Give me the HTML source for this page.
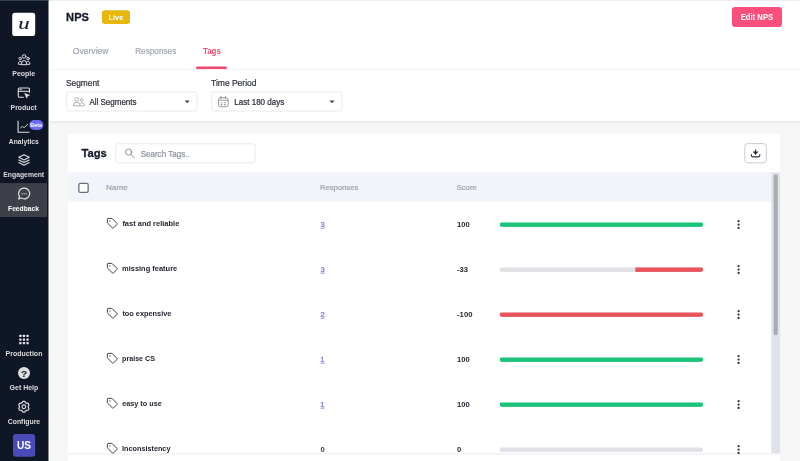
<!DOCTYPE html>
<html lang="en">
<head>
<meta charset="utf-8">
<title>NPS - Tags</title>
<style>
*{box-sizing:border-box;margin:0;padding:0}
html,body{width:800px;height:461px;overflow:hidden;background:#f6f6f6}
body{position:relative;font-family:"Liberation Sans","DejaVu Sans",sans-serif}
#g{position:absolute;left:0;top:0;width:800px;height:461px;display:block}
#page{position:absolute;left:0;top:0;width:800px;height:461px;overflow:hidden;background:#f6f6f6;will-change:transform}
.t{position:absolute;left:0;top:0;white-space:nowrap;line-height:1;transform-origin:0 0;display:block}
.ic{fill:none;stroke:#dfe0e2;stroke-linecap:round;stroke-linejoin:round}
</style>
</head>
<body>
<div id="page">
<svg id="g" width="800" height="461" viewBox="0 0 800 461">
<defs>
<linearGradient id="sh" x1="0" y1="0" x2="0" y2="1"><stop offset="0" stop-color="#e3e4e7"/><stop offset="0.3" stop-color="#ebebed"/><stop offset="0.65" stop-color="#f4f4f4"/><stop offset="1" stop-color="#f6f6f6"/></linearGradient>
</defs>
<rect x="48.00" y="0.00" width="752.00" height="121.40" fill="#fff"/>
<rect x="48.00" y="0.00" width="752.00" height="1.00" fill="#efefef"/>
<rect x="48.00" y="121.20" width="752.00" height="3.60" fill="url(#sh)"/>
<rect x="50.00" y="69.00" width="750.00" height="1.00" fill="#f2f2f2"/>
<rect x="48.00" y="121.00" width="2.20" height="340.00" fill="#fff"/>
<rect x="196.00" y="66.40" width="31.00" height="2.60" rx="1.3" fill="#f5486f"/>
<rect x="102.00" y="10.20" width="28.00" height="13.80" rx="3" fill="#e8b70d"/>
<rect x="732.00" y="7.00" width="50.00" height="20.00" rx="3" fill="#fa4f7c"/>
<rect x="66.70" y="91.90" width="130.30" height="19.10" rx="2.50" fill="#fff" stroke="#e8eaee" stroke-width="1"/>
<rect x="211.70" y="91.90" width="130.30" height="19.10" rx="2.50" fill="#fff" stroke="#e8eaee" stroke-width="1"/>
<path d="M184.6 100.5h5.1l-2.55 2.7z" fill="#3b3f4a"/>
<path d="M329.5 100.5h5.1l-2.55 2.7z" fill="#3b3f4a"/>
<g transform="translate(73.00 96.60) scale(0.5000)"><g fill="none" stroke="#a5a8ae" stroke-width="1.8" stroke-linejoin="round"><circle cx="7.5" cy="5.5" r="3.6"/><circle cx="17.5" cy="7" r="2.8"/><path d="M1 18.5v-1.5a6.5 5.5 0 0 1 13 0v1.5z"/><path d="M14 18.5h9v-1.2a5.2 4.6 0 0 0-8-3.9"/></g></g>
<g transform="translate(217.80 96.00) scale(0.5000)"><g fill="none" stroke="#8a8d94" stroke-width="1.8" stroke-linecap="round" stroke-linejoin="round"><rect x="1.5" y="3.5" width="19" height="18" rx="3.5"/><path d="M1.5 8.5h19M6.5 1v4M15.5 1v4"/><path d="M7 13.5h1.5M13.5 13.5H15M7 17.2h1.5M13.5 17.2H15" stroke-width="2.2"/></g></g>
<rect x="67.80" y="133.80" width="712.30" height="340.00" rx="4" fill="#fff"/>
<rect x="115.80" y="143.80" width="139.40" height="19.00" rx="2.50" fill="#fff" stroke="#e7e9f0" stroke-width="1"/>
<g transform="translate(124.80 148.30) scale(0.5000)"><g fill="none" stroke="#8a8d94" stroke-width="1.9" stroke-linecap="round"><circle cx="7.6" cy="7.6" r="6.2"/><path d="M12.4 12.2l6.6 6.2"/></g></g>
<rect x="744.80" y="143.60" width="21.50" height="19.20" rx="3.00" fill="#fff" stroke="#c9ccd2" stroke-width="1"/>
<g transform="translate(750.60 149.20) scale(0.5000)"><g fill="none" stroke="#2b2e37" stroke-width="2.2" stroke-linecap="round" stroke-linejoin="round"><path d="M10 1v8.5"/><path d="M1.5 10.5v1.6a3.2 3.2 0 0 0 3.2 3.2h10.6a3.2 3.2 0 0 0 3.2-3.2v-1.6"/></g><path d="M5.2 5.2h9.6L10 10.6z" fill="#2b2e37" stroke="#2b2e37" stroke-width="1" stroke-linejoin="round"/></g>
<rect x="67.80" y="172.30" width="703.60" height="29.40" fill="#f1f4f8"/>
<rect x="78.85" y="183.35" width="9.30" height="9.10" rx="1.35" fill="#fff" stroke="#6d7077" stroke-width="1.3"/>
<rect x="771.30" y="172.30" width="8.80" height="281.00" fill="#dfe2e6"/>
<rect x="773.60" y="174.30" width="4.20" height="161.00" rx="2.1" fill="#a9acb1"/>
<rect x="67.80" y="453.00" width="712.30" height="8.00" fill="#fff"/>
<rect x="67.80" y="453.00" width="712.30" height="1.60" fill="#f0f2f6"/>
<g transform="translate(106.80 217.80) scale(0.5000)"><g fill="none" stroke="#3c3f47" stroke-width="2.0" stroke-linejoin="round"><path d="M1.2 2.6a1.4 1.4 0 0 1 1.4-1.4h7.2a1.6 1.6 0 0 1 1.1.5l9.4 9.4a1.6 1.6 0 0 1 0 2.2l-6.9 6.9a1.6 1.6 0 0 1-2.2 0L1.7 10.8a1.6 1.6 0 0 1-.5-1.1z"/></g><circle cx="6.3" cy="6.3" r="1.3" fill="#45484f"/></g>
<clipPath id="c0"><rect x="499.6" y="222.3" width="203.6" height="4.6" rx="2.3"/></clipPath><g clip-path="url(#c0)">
<rect x="499.60" y="222.30" width="203.60" height="4.60" fill="#1cc37b"/>
</g>
<circle cx="738.6" cy="221.2" r="1.15" fill="#34373f"/>
<circle cx="738.6" cy="224.6" r="1.15" fill="#34373f"/>
<circle cx="738.6" cy="228.0" r="1.15" fill="#34373f"/>
<rect x="320.60" y="227.70" width="4.00" height="0.80" fill="#7070e2"/>
<g transform="translate(106.80 262.80) scale(0.5000)"><g fill="none" stroke="#3c3f47" stroke-width="2.0" stroke-linejoin="round"><path d="M1.2 2.6a1.4 1.4 0 0 1 1.4-1.4h7.2a1.6 1.6 0 0 1 1.1.5l9.4 9.4a1.6 1.6 0 0 1 0 2.2l-6.9 6.9a1.6 1.6 0 0 1-2.2 0L1.7 10.8a1.6 1.6 0 0 1-.5-1.1z"/></g><circle cx="6.3" cy="6.3" r="1.3" fill="#45484f"/></g>
<clipPath id="c1"><rect x="499.6" y="267.3" width="203.6" height="4.6" rx="2.3"/></clipPath><g clip-path="url(#c1)">
<rect x="499.60" y="267.30" width="203.60" height="4.60" fill="#dfe1e5"/>
<rect x="635.40" y="267.30" width="67.80" height="4.60" fill="#e9535b"/>
</g>
<circle cx="738.6" cy="266.2" r="1.15" fill="#34373f"/>
<circle cx="738.6" cy="269.6" r="1.15" fill="#34373f"/>
<circle cx="738.6" cy="273.0" r="1.15" fill="#34373f"/>
<rect x="320.60" y="272.70" width="4.00" height="0.80" fill="#7070e2"/>
<g transform="translate(106.80 307.80) scale(0.5000)"><g fill="none" stroke="#3c3f47" stroke-width="2.0" stroke-linejoin="round"><path d="M1.2 2.6a1.4 1.4 0 0 1 1.4-1.4h7.2a1.6 1.6 0 0 1 1.1.5l9.4 9.4a1.6 1.6 0 0 1 0 2.2l-6.9 6.9a1.6 1.6 0 0 1-2.2 0L1.7 10.8a1.6 1.6 0 0 1-.5-1.1z"/></g><circle cx="6.3" cy="6.3" r="1.3" fill="#45484f"/></g>
<clipPath id="c2"><rect x="499.6" y="312.3" width="203.6" height="4.6" rx="2.3"/></clipPath><g clip-path="url(#c2)">
<rect x="499.60" y="312.30" width="203.60" height="4.60" fill="#e9535b"/>
</g>
<circle cx="738.6" cy="311.2" r="1.15" fill="#34373f"/>
<circle cx="738.6" cy="314.6" r="1.15" fill="#34373f"/>
<circle cx="738.6" cy="318.0" r="1.15" fill="#34373f"/>
<rect x="320.60" y="317.70" width="4.00" height="0.80" fill="#7070e2"/>
<g transform="translate(106.80 352.80) scale(0.5000)"><g fill="none" stroke="#3c3f47" stroke-width="2.0" stroke-linejoin="round"><path d="M1.2 2.6a1.4 1.4 0 0 1 1.4-1.4h7.2a1.6 1.6 0 0 1 1.1.5l9.4 9.4a1.6 1.6 0 0 1 0 2.2l-6.9 6.9a1.6 1.6 0 0 1-2.2 0L1.7 10.8a1.6 1.6 0 0 1-.5-1.1z"/></g><circle cx="6.3" cy="6.3" r="1.3" fill="#45484f"/></g>
<clipPath id="c3"><rect x="499.6" y="357.3" width="203.6" height="4.6" rx="2.3"/></clipPath><g clip-path="url(#c3)">
<rect x="499.60" y="357.30" width="203.60" height="4.60" fill="#1cc37b"/>
</g>
<circle cx="738.6" cy="356.2" r="1.15" fill="#34373f"/>
<circle cx="738.6" cy="359.6" r="1.15" fill="#34373f"/>
<circle cx="738.6" cy="363.0" r="1.15" fill="#34373f"/>
<rect x="320.60" y="362.70" width="4.00" height="0.80" fill="#7070e2"/>
<g transform="translate(106.80 397.80) scale(0.5000)"><g fill="none" stroke="#3c3f47" stroke-width="2.0" stroke-linejoin="round"><path d="M1.2 2.6a1.4 1.4 0 0 1 1.4-1.4h7.2a1.6 1.6 0 0 1 1.1.5l9.4 9.4a1.6 1.6 0 0 1 0 2.2l-6.9 6.9a1.6 1.6 0 0 1-2.2 0L1.7 10.8a1.6 1.6 0 0 1-.5-1.1z"/></g><circle cx="6.3" cy="6.3" r="1.3" fill="#45484f"/></g>
<clipPath id="c4"><rect x="499.6" y="402.3" width="203.6" height="4.6" rx="2.3"/></clipPath><g clip-path="url(#c4)">
<rect x="499.60" y="402.30" width="203.60" height="4.60" fill="#1cc37b"/>
</g>
<circle cx="738.6" cy="401.2" r="1.15" fill="#34373f"/>
<circle cx="738.6" cy="404.6" r="1.15" fill="#34373f"/>
<circle cx="738.6" cy="408.0" r="1.15" fill="#34373f"/>
<rect x="320.60" y="407.70" width="4.00" height="0.80" fill="#7070e2"/>
<g transform="translate(106.80 442.80) scale(0.5000)"><g fill="none" stroke="#3c3f47" stroke-width="2.0" stroke-linejoin="round"><path d="M1.2 2.6a1.4 1.4 0 0 1 1.4-1.4h7.2a1.6 1.6 0 0 1 1.1.5l9.4 9.4a1.6 1.6 0 0 1 0 2.2l-6.9 6.9a1.6 1.6 0 0 1-2.2 0L1.7 10.8a1.6 1.6 0 0 1-.5-1.1z"/></g><circle cx="6.3" cy="6.3" r="1.3" fill="#45484f"/></g>
<clipPath id="c5"><rect x="499.6" y="447.3" width="203.6" height="4.6" rx="2.3"/></clipPath><g clip-path="url(#c5)">
<rect x="499.60" y="447.30" width="203.60" height="4.60" fill="#dfe1e5"/>
</g>
<circle cx="738.6" cy="446.2" r="1.15" fill="#34373f"/>
<circle cx="738.6" cy="449.6" r="1.15" fill="#34373f"/>
<circle cx="738.6" cy="453.0" r="1.15" fill="#34373f"/>
<rect x="0.00" y="0.00" width="48.50" height="461.00" fill="#0f1626"/>
<rect x="0.00" y="0.00" width="48.50" height="1.00" fill="#3b3f49"/>
<rect x="0.00" y="183.10" width="47.00" height="33.90" fill="#3d4049"/>
<rect x="12.20" y="12.80" width="23.00" height="23.20" rx="2.8" fill="#fff"/>
<rect x="29.30" y="120.00" width="14.10" height="10.00" rx="5" fill="#6b6bf3"/>
<rect x="13.00" y="434.00" width="22.20" height="22.80" rx="3" fill="#4a4ab9"/>
<g transform="translate(17.80 53.80) scale(0.5000)"><g class="ic" stroke-width="2.0"><circle cx="12.6" cy="5.2" r="3.6"/><circle cx="4.8" cy="9.6" r="2.6"/><circle cx="20.4" cy="9.6" r="2.6"/><path d="M7.6 21v-2.4a5 5 0 0 1 10 0V21z"/><path d="M7.6 21H1.2v-2a3.8 3.8 0 0 1 6.6-2.6M17.6 21H24v-2a3.8 3.8 0 0 0-6.6-2.6"/></g></g>
<g class="ic" stroke-width="1.05" style="stroke:#e2e3e5"><path d="M23.4 97.3h-3.9a1.2 1.2 0 0 1-1.2-1.2v-7a1.2 1.2 0 0 1 1.2-1.2h8.8a1.2 1.2 0 0 1 1.2 1.2v3.2"/><path d="M18.3 91.3h11.2" stroke-linecap="butt"/><path d="M19.9 89.6h1.5" stroke-width="0.9"/></g><path d="M24.7 93.3l4.9 1.9-2.1.8-.9 2.2z" fill="#e2e3e5" stroke="#e2e3e5" stroke-width="0.5" stroke-linejoin="round"/>
<g transform="translate(17.30 120.20) scale(0.5000)"><g class="ic" stroke-width="2.2"><path d="M1.6 1.2v23h22.6" stroke-linecap="butt" stroke-linejoin="miter"/><path d="M6.6 15.4l3.4-3 3.6 2.6 7.2-6.6" stroke-width="1.8"/></g></g>
<g transform="translate(18.00 154.00) scale(0.4840)"><g class="ic" stroke-width="2.3"><path d="M12.4 1.4l10.8 5.4-10.8 5.4L1.6 6.8z"/><path d="M1.8 12.4l10.6 5.4 10.6-5.4M1.8 17.6l10.6 5.4 10.6-5.4"/></g></g>
<g class="ic" stroke-width="1.15" style="stroke:#e4e5e7"><path d="M24.2 188.1a5.4 5.4 0 1 1-3.1 9.8l-2.5 1.2.9-2.7A5.4 5.4 0 0 1 24.2 188.1z"/></g><g fill="#b4b5b9"><circle cx="22.1" cy="193.7" r="0.75"/><circle cx="24.1" cy="193.7" r="0.75"/><circle cx="26.1" cy="193.7" r="0.75"/></g>
<g transform="translate(19.20 334.80) scale(0.5000)"><g fill="#e4e5e7"><rect x="0" y="0" width="4.6" height="4.6" rx="0.8"/><rect x="7.2" y="0" width="4.6" height="4.6" rx="0.8"/><rect x="14.4" y="0" width="4.6" height="4.6" rx="0.8"/><rect x="0" y="7.2" width="4.6" height="4.6" rx="0.8"/><rect x="7.2" y="7.2" width="4.6" height="4.6" rx="0.8"/><rect x="14.4" y="7.2" width="4.6" height="4.6" rx="0.8"/><rect x="0" y="14.4" width="4.6" height="4.6" rx="0.8"/><rect x="7.2" y="14.4" width="4.6" height="4.6" rx="0.8"/><rect x="14.4" y="14.4" width="4.6" height="4.6" rx="0.8"/></g></g>
<circle cx="24" cy="373" r="6" fill="#dddee0"/>
<g transform="translate(17.80 400.80) scale(0.5000)"><g class="ic" stroke-width="2.5"><path d="M12.10 1.00L13.05 1.04L13.96 1.36L14.66 2.34L15.21 3.35L15.86 3.83L16.55 4.19L17.20 4.61L17.95 4.93L19.10 4.90L20.30 5.02L21.03 5.65L21.54 6.45L21.98 7.29L22.15 8.24L21.66 9.34L21.06 10.32L20.97 11.12L21.00 11.90L20.97 12.68L21.06 13.48L21.66 14.46L22.15 15.56L21.98 16.51L21.54 17.35L21.03 18.15L20.30 18.78L19.10 18.90L17.95 18.87L17.20 19.19L16.55 19.61L15.86 19.97L15.21 20.45L14.66 21.46L13.96 22.44L13.05 22.76L12.10 22.80L11.15 22.76L10.24 22.44L9.54 21.46L8.99 20.45L8.34 19.97L7.65 19.61L7.00 19.19L6.25 18.87L5.10 18.90L3.90 18.78L3.17 18.15L2.66 17.35L2.22 16.51L2.05 15.56L2.54 14.46L3.14 13.48L3.23 12.68L3.20 11.90L3.23 11.12L3.14 10.32L2.54 9.34L2.05 8.24L2.22 7.29L2.66 6.45L3.17 5.65L3.90 5.02L5.10 4.90L6.25 4.93L7.00 4.61L7.65 4.19L8.34 3.83L8.99 3.35L9.54 2.34L10.24 1.36L11.15 1.04z"/><circle cx="12.1" cy="11.9" r="3.7" stroke-width="2.2"/></g></g>
</svg>
<div class="t" style="-webkit-text-stroke:0.3px;font-size:11.8px;font-weight:700;color:#141a2a;transform:translate(66.09px,12px) scaleX(0.9435)">NPS</div>
<div class="t" style="font-size:7.9px;font-weight:700;color:#ffffff;transform:translate(108.53px,14px) scaleX(0.9333)">Live</div>
<div class="t" style="font-size:8.5px;font-weight:700;color:#ffffff;transform:translate(740.63px,13px) scaleX(0.9061)">Edit NPS</div>
<div class="t" style="-webkit-text-stroke:0.22px;font-size:8.6px;font-weight:400;color:#a2a8b3;transform:translate(72.72px,47px) scaleX(1.0007)">Overview</div>
<div class="t" style="-webkit-text-stroke:0.22px;font-size:8.6px;font-weight:400;color:#a2a8b3;transform:translate(135.18px,47px) scaleX(0.9552)">Responses</div>
<div class="t" style="font-size:8.6px;font-weight:700;color:#f5486f;transform:translate(202.99px,47px) scaleX(0.9166)">Tags</div>
<div class="t" style="-webkit-text-stroke:0.22px;font-size:8.6px;font-weight:400;color:#30343f;transform:translate(65.93px,79px) scaleX(0.9735)">Segment</div>
<div class="t" style="-webkit-text-stroke:0.22px;font-size:8.6px;font-weight:400;color:#30343f;transform:translate(211.05px,79px) scaleX(0.9878)">Time Period</div>
<div class="t" style="-webkit-text-stroke:0.22px;font-size:8.6px;font-weight:400;color:#2a2e3a;transform:translate(89.40px,98px) scaleX(0.9310)">All Segments</div>
<div class="t" style="-webkit-text-stroke:0.22px;font-size:8.6px;font-weight:400;color:#2a2e3a;transform:translate(234.30px,98px) scaleX(0.9333)">Last 180 days</div>
<div class="t" style="-webkit-text-stroke:0.3px;font-size:11.8px;font-weight:700;color:#141a2a;transform:translate(81.38px,148px) scaleX(0.9500)">Tags</div>
<div class="t" style="-webkit-text-stroke:0.22px;font-size:8.6px;font-weight:400;color:#8d929c;transform:translate(140.65px,150px) scaleX(0.9346)">Search Tags..</div>
<div class="t" style="-webkit-text-stroke:0.22px;font-size:7.9px;font-weight:400;color:#9fa3ab;transform:translate(106.05px,184px) scaleX(1.0335)">Name</div>
<div class="t" style="-webkit-text-stroke:0.22px;font-size:7.9px;font-weight:400;color:#9fa3ab;transform:translate(319.89px,184px) scaleX(0.9709)">Responses</div>
<div class="t" style="-webkit-text-stroke:0.22px;font-size:7.9px;font-weight:400;color:#9fa3ab;transform:translate(456.63px,184px) scaleX(0.9761)">Score</div>
<div class="t" style="font-size:7.2px;font-weight:700;color:#dcdde0;transform:translate(12.31px,70px) scaleX(0.9705)">People</div>
<div class="t" style="font-size:7.2px;font-weight:700;color:#dcdde0;transform:translate(10.52px,104px) scaleX(0.9623)">Product</div>
<div class="t" style="font-size:7.2px;font-weight:700;color:#dcdde0;transform:translate(8.76px,138px) scaleX(0.9402)">Analytics</div>
<div class="t" style="font-size:7.2px;font-weight:700;color:#dcdde0;transform:translate(3.33px,171px) scaleX(0.9459)">Engagement</div>
<div class="t" style="font-size:7.2px;font-weight:700;color:#ffffff;transform:translate(8.03px,205px) scaleX(0.9349)">Feedback</div>
<div class="t" style="font-size:7.2px;font-weight:700;color:#dcdde0;transform:translate(5.51px,350px) scaleX(0.9730)">Production</div>
<div class="t" style="font-size:7.2px;font-weight:700;color:#dcdde0;transform:translate(9.56px,384px) scaleX(0.9724)">Get Help</div>
<div class="t" style="font-size:7.2px;font-weight:700;color:#dcdde0;transform:translate(7.76px,418px) scaleX(0.9552)">Configure</div>
<div class="t" style="font-size:5.8px;font-weight:700;color:#ffffff;transform:translate(30.25px,123px) scaleX(0.9306)">Beta</div>
<div class="t" style="font-size:10.6px;font-weight:700;color:#ffffff;transform:translate(16.90px,440px) scaleX(0.9541)">US</div>
<div class="t" style="font-size:9.6px;font-weight:700;color:#0f1626;transform:translate(21.07px,369px) scaleX(1.0526)">?</div>
<div class="t" style="font-size:7.9px;font-weight:700;color:#1e212a;transform:translate(122.38px,220px) scaleX(0.9476)">fast and reliable</div>
<div class="t" style="-webkit-text-stroke:0.22px;font-size:8.0px;font-weight:400;color:#7070e2;transform:translate(320.44px,221px) scaleX(0.9500)">3</div>
<div class="t" style="font-size:8.0px;font-weight:700;color:#1e212a;transform:translate(456.92px,221px) scaleX(0.9520)">100</div>
<div class="t" style="font-size:7.9px;font-weight:700;color:#1e212a;transform:translate(122.03px,265px) scaleX(0.9461)">missing feature</div>
<div class="t" style="-webkit-text-stroke:0.22px;font-size:8.0px;font-weight:400;color:#7070e2;transform:translate(320.44px,266px) scaleX(0.9500)">3</div>
<div class="t" style="font-size:8.0px;font-weight:700;color:#1e212a;transform:translate(457.04px,266px) scaleX(0.9563)">-33</div>
<div class="t" style="font-size:7.9px;font-weight:700;color:#1e212a;transform:translate(122.38px,310px) scaleX(0.9321)">too expensive</div>
<div class="t" style="-webkit-text-stroke:0.22px;font-size:8.0px;font-weight:400;color:#7070e2;transform:translate(320.44px,311px) scaleX(0.9500)">2</div>
<div class="t" style="font-size:8.0px;font-weight:700;color:#1e212a;transform:translate(457.04px,311px) scaleX(0.9639)">-100</div>
<div class="t" style="font-size:7.9px;font-weight:700;color:#1e212a;transform:translate(122.05px,355px) scaleX(0.9039)">praise CS</div>
<div class="t" style="-webkit-text-stroke:0.22px;font-size:8.0px;font-weight:400;color:#7070e2;transform:translate(320.21px,356px) scaleX(0.9500)">1</div>
<div class="t" style="font-size:8.0px;font-weight:700;color:#1e212a;transform:translate(456.92px,356px) scaleX(0.9520)">100</div>
<div class="t" style="font-size:7.9px;font-weight:700;color:#1e212a;transform:translate(122.15px,400px) scaleX(0.9227)">easy to use</div>
<div class="t" style="-webkit-text-stroke:0.22px;font-size:8.0px;font-weight:400;color:#7070e2;transform:translate(320.21px,401px) scaleX(0.9500)">1</div>
<div class="t" style="font-size:8.0px;font-weight:700;color:#1e212a;transform:translate(456.92px,401px) scaleX(0.9520)">100</div>
<div class="t" style="font-size:7.9px;font-weight:700;color:#1e212a;transform:translate(122.04px,445px) scaleX(0.9192)">Inconsistency</div>
<div class="t" style="font-size:8.0px;font-weight:700;color:#3d4048;transform:translate(320.44px,446px) scaleX(0.9500)">0</div>
<div class="t" style="font-size:8.0px;font-weight:700;color:#1e212a;transform:translate(457.04px,446px) scaleX(0.9500)">0</div>
<div class="t" style="font-family:'Liberation Serif',serif;font-style:italic;-webkit-text-stroke:0.12px;font-size:16.5px;font-weight:400;color:#141a2a;transform:translate(18.19px,16px) scaleX(1.3778)">u</div>
</div>
</body>
</html>
